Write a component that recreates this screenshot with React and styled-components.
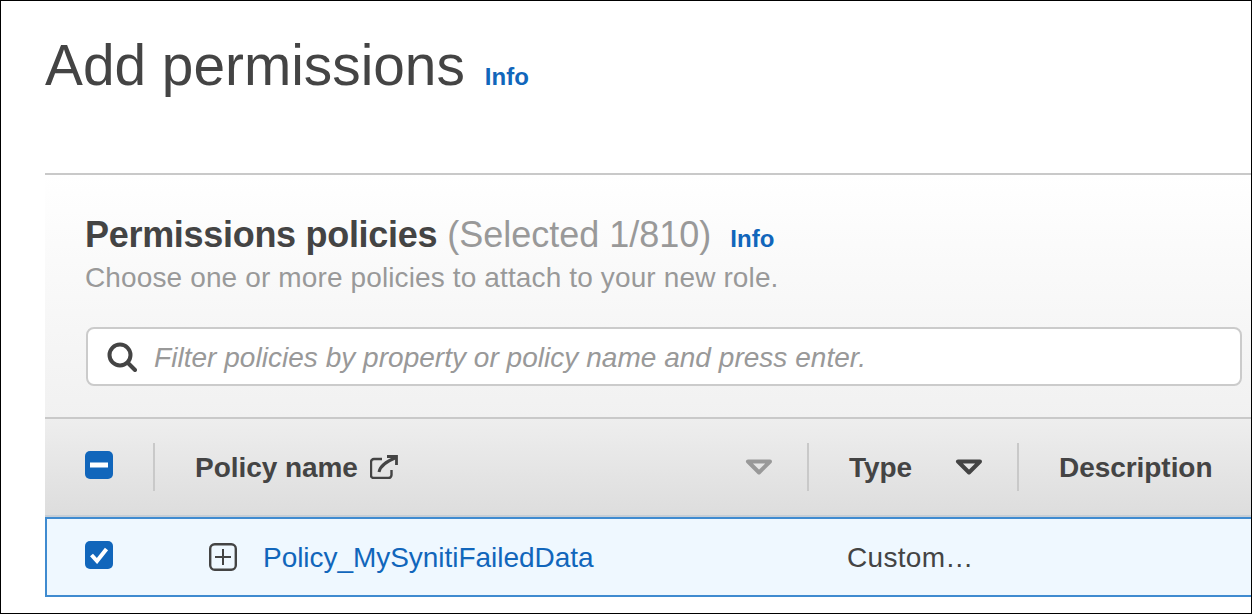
import React from "react";
import styled, { createGlobalStyle } from "styled-components";

const Global = createGlobalStyle`
  html, body { margin: 0; padding: 0; background: #fff; }
  body { font-family: "Liberation Sans", Arial, sans-serif; }
`;
const Frame = styled.div`
  box-sizing: border-box; width: 1252px; height: 614px; overflow: hidden;
  border: 1px solid #000;
  padding-left: 44px; background: #fff; color: #444;
`;
const TitleRow = styled.div`
  height: 172px; display: flex; align-items: flex-start; gap: 20px; padding-top: 34px; box-sizing: border-box;
`;
const Title = styled.h1`
  margin: 0; font-weight: 400; font-size: 56.8px; line-height: 62px; color: #444;
`;
const Info = styled.a`
  font-weight: 700; font-size: 24px; line-height: 28px; color: #1166bb;
`;
const TitleInfo = styled(Info)`margin-top: 28px;`;
const Panel = styled.section`
  border-top: 2px solid #c9c9c9;
  background: linear-gradient(#ffffff, #f1f1f1);
  height: 244px; box-sizing: border-box;
  padding: 40px 9px 0 41px;
`;
const HeadingRow = styled.div`display: flex; align-items: baseline; height: 39px; margin-left: -1px;`;
const Heading = styled.h2`
  margin: 0; font-size: 36px; line-height: 39px; font-weight: 700; color: #444; letter-spacing: -0.3px;
`;
const Count = styled.span`
  font-size: 36px; line-height: 39px; color: #999; margin-left: 10px;
`;
const HeadInfo = styled(Info)`margin-left: 19px;`;
const Sub = styled.p`
  margin: 9px 0 0 -1px; font-size: 28px; line-height: 30px; color: #999; letter-spacing: 0.13px;
`;
const Search = styled.div`
  margin-top: 34px; height: 59px; box-sizing: border-box; border: 2px solid #cbcbcb; border-radius: 8px;
  background: #fff; display: flex; align-items: center; padding-left: 19px; gap: 17px;
`;
const Placeholder = styled.span`
  font-style: italic; font-size: 28px; color: #999; white-space: nowrap; letter-spacing: 0.03px; padding-top: 2px;
`;
const Header = styled.div`
  border-top: 2px solid #c9c9c9; border-bottom: 2px solid #c6ced6; height: 100px; box-sizing: border-box;
  background: linear-gradient(#eeeeee, #dddddd);
  display: grid; grid-template-columns: 108px 654px 210px 1fr; align-items: center;
`;
const HeaderCell = styled.div`
  height: 48px; display: flex; align-items: center; box-sizing: border-box;
  border-left: 2px solid #c9c9c9;
  padding-left: 40px; padding-right: ${p => p.$right || 0}px;
  justify-content: ${p => (p.$between ? "space-between" : "flex-start")};
`;
const HeaderLabel = styled.span`
  display: inline-flex; align-items: center; gap: 12px; padding-top: 2px;
  font-weight: 700; font-size: 28px; color: #444; letter-spacing: -0.05px;
`;
const Row = styled.div`
  height: 80px; box-sizing: border-box; border: 2px solid #3f8bd0; border-right: none;
  background: #eff8ff; display: grid; grid-template-columns: 106px 654px 1fr; align-items: center;
`;
const RowCell = styled.div`
  display: flex; align-items: center; gap: 26px; padding-left: ${p => p.$pad}px;
`;
const PolicyLink = styled.a`font-size: 28px; color: #1166bb; padding-top: 2px; letter-spacing: -0.04px;`;
const TypeText = styled.span`font-size: 28px; color: #444; letter-spacing: 0.3px; padding-top: 2px;`;
const Check = styled.span`
  width: 28px; height: 28px; border-radius: 5px; background: #1166bb; display: flex; align-items: center; justify-content: center;
`;
const CheckCell = styled.div`padding: 0 0 4px ${p => p.$pad}px; display: flex;`;
const ExternalSvg = styled.svg`margin-top: -2px;`;

const SearchIcon = () => (
  <svg width="30" height="30" viewBox="0 0 30 30" fill="none" stroke="#444" strokeWidth="4">
    <circle cx="13" cy="13" r="10.5" />
    <path d="M20.5 20.5l7.5 7.5" strokeLinecap="round" />
  </svg>
);
const ExternalIcon = () => (
  <ExternalSvg width="28" height="24" viewBox="0 0 28 24" fill="none" stroke="#444" strokeWidth="2.4">
    <path d="M12 4H4a3 3 0 0 0-3 3v13.5a2.5 2.5 0 0 0 2.5 2.5h15a3 3 0 0 0 3-3v-5" />
    <path d="M9 17C10 11 15 7 26 2.5" strokeWidth="3" />
    <path d="M17 1.5h9.5V10" strokeWidth="2.8" />
  </ExternalSvg>
);
const SortIcon = ({ color }) => (
  <svg width="28" height="16" viewBox="0 0 28 16" fill="none" stroke={color} strokeWidth="4" strokeLinejoin="round">
    <path d="M3 2.5h22L14 13.5z" />
  </svg>
);
const ExpandIcon = () => (
  <svg width="28" height="28" viewBox="0 0 28 28" fill="none" stroke="#444" strokeWidth="2.4">
    <rect x="1.2" y="1.2" width="25.6" height="25.6" rx="4.5" />
    <path d="M14 6v16M6 14h16" strokeWidth="2" />
  </svg>
);

export default function App() {
  return (
    <Frame>
      <Global />
      <TitleRow>
        <Title>Add permissions</Title>
        <TitleInfo>Info</TitleInfo>
      </TitleRow>
      <Panel>
        <HeadingRow>
          <Heading>Permissions policies</Heading>
          <Count>(Selected 1/810)</Count>
          <HeadInfo>Info</HeadInfo>
        </HeadingRow>
        <Sub>Choose one or more policies to attach to your new role.</Sub>
        <Search>
          <SearchIcon />
          <Placeholder>Filter policies by property or policy name and press enter.</Placeholder>
        </Search>
      </Panel>
      <Header>
        <CheckCell $pad={40}>
          <Check>
            <svg width="18" height="6" viewBox="0 0 18 6"><rect width="18" height="5" y="0.5" fill="#fff" /></svg>
          </Check>
        </CheckCell>
        <HeaderCell $right={34} $between>
          <HeaderLabel>Policy name <ExternalIcon /></HeaderLabel>
          <SortIcon color="#999" />
        </HeaderCell>
        <HeaderCell $right={34} $between>
          <HeaderLabel>Type</HeaderLabel>
          <SortIcon color="#444" />
        </HeaderCell>
        <HeaderCell>
          <HeaderLabel>Description</HeaderLabel>
        </HeaderCell>
      </Header>
      <Row>
        <CheckCell $pad={38}>
          <Check>
            <svg width="20" height="18" viewBox="0 0 20 18" fill="none" stroke="#fff" strokeWidth="4">
              <path d="M2.5 9l5.5 6L17.5 3" />
            </svg>
          </Check>
        </CheckCell>
        <RowCell $pad={56}>
          <ExpandIcon />
          <PolicyLink>Policy_MySynitiFailedData</PolicyLink>
        </RowCell>
        <RowCell $pad={40}>
          <TypeText>Custom…</TypeText>
        </RowCell>
      </Row>
    </Frame>
  );
}
